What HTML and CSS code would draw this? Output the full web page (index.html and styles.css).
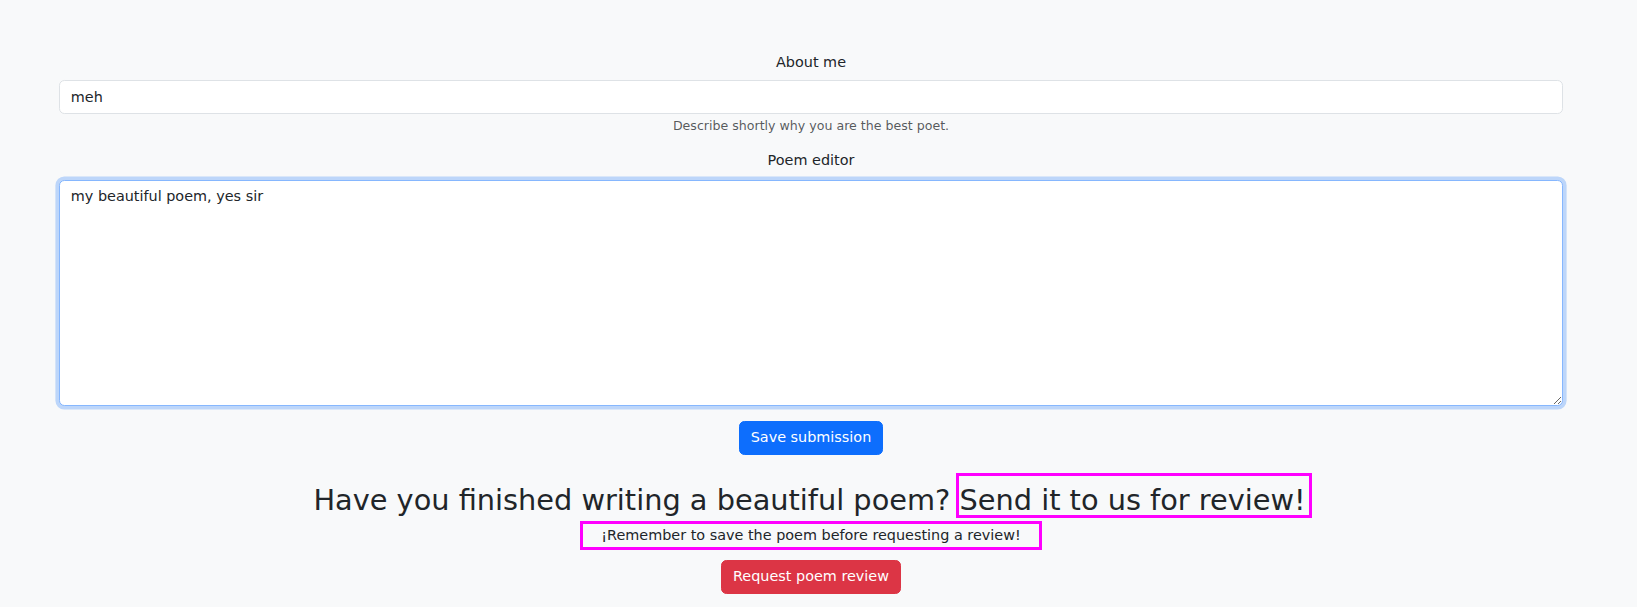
FILE: index.html
```html
<!DOCTYPE html>
<html lang="en">
<head>
<meta charset="utf-8">
<title>Poem editor</title>
<link rel="stylesheet" href="styles.css">
</head>
<body>
<main class="page">
  <form class="poem-form">
    <label class="field-label" for="about">About me</label>
    <input class="field-input" id="about" type="text" value="meh">
    <div class="field-help">Describe shortly why you are the best poet.</div>

    <label class="field-label editor-label" for="poem">Poem editor</label>
    <textarea class="field-textarea is-focused" id="poem">my beautiful poem, yes sir</textarea>

    <div class="actions">
      <button type="button" class="btn btn-primary">Save submission</button>
    </div>
  </form>

  <section class="review">
    <h2 class="review-title">Have you finished writing a beautiful poem? <span class="highlight">Send it to us for review!</span></h2>
    <p class="review-note">¡Remember to save the poem before requesting a review!</p>
    <button type="button" class="btn btn-danger">Request poem review</button>
  </section>
</main>
</body>
</html>
```

FILE: styles.css
```css
* {
  box-sizing: border-box;
}

html {
  font-size: 14.4px;
}

html, body {
  margin: 0;
  padding: 0;
}

body {
  background: #f8f9fa;
  color: #212529;
  font-family: "DejaVu Sans", sans-serif;
  font-size: 1rem;
  line-height: 1.5;
}

.page {
  padding: 52.2px 74px 0 59px;
}

.poem-form {
  display: flex;
  flex-direction: column;
  align-items: stretch;
}

.field-label {
  display: block;
  text-align: center;
  line-height: 1.5;
  margin-bottom: 6.2px;
}

.editor-label {
  margin-top: 14.4px;
  margin-bottom: 8.2px;
}

.field-input,
.field-textarea {
  display: block;
  width: 100%;
  font-family: "DejaVu Sans", sans-serif;
  font-size: 1rem;
  color: #212529;
  background: #fff;
  border: 1px solid #dee2e6;
  border-radius: 0.375rem;
  padding: 0 0.75rem;
  margin: 0;
  outline: none;
}

.field-input {
  height: 33.6px;
  line-height: 31.6px;
}

.field-help {
  margin-top: 3.3px;
  text-align: center;
  font-size: 0.875em;
  line-height: 1.5;
  color: rgba(33, 37, 41, 0.75);
}

.field-textarea {
  height: 226px;
  padding: 0.375rem 0.75rem;
  line-height: 1.5;
  resize: vertical;
}

.field-textarea.is-focused {
  border-color: #86b7fe;
  box-shadow: 0 0 0 0.25rem rgba(13, 110, 253, 0.25);
}

.actions {
  display: flex;
  justify-content: center;
  margin-top: 15px;
}

.btn {
  display: inline-block;
  font-family: "DejaVu Sans", sans-serif;
  font-size: 1rem;
  line-height: 1.5;
  padding: 0.375rem 0.75rem;
  border: 1px solid transparent;
  border-radius: 0.375rem;
  color: #fff;
  cursor: pointer;
}

.btn-primary {
  background: #0d6efd;
  border-color: #0d6efd;
}

.btn-danger {
  background: #dc3545;
  border-color: #dc3545;
  margin-top: 13px;
}

.review {
  display: flex;
  flex-direction: column;
  align-items: center;
  margin-top: 20.6px;
}

.review-title {
  margin: 0;
  font-size: 2rem;
  font-weight: 400;
  line-height: 28.8px;
  text-align: center;
}

.highlight {
  display: inline-block;
  line-height: 28.8px;
  padding: 9.6px 3px 0.5px 0;
  outline: 3px solid #ff00ff;
}

.review-note {
  margin: 9px 0 0;
  padding: 0.7px 18px;
  line-height: 1.5;
  font-size: 1rem;
  outline: 3px solid #ff00ff;
}
```
